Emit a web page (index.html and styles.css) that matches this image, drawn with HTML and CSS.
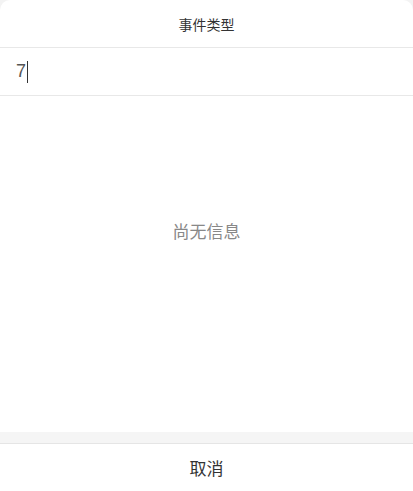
FILE: index.html
```html
<!DOCTYPE html>
<html lang="zh-CN">
<head>
    <meta charset="UTF-8">
    <meta name="viewport" content="width=device-width, initial-scale=1.0">
    <title>事件类型</title>
    <link rel="stylesheet" href="styles.css">
</head>
<body>
    <div class="sheet">
        <div class="sheet-title">事件类型</div>
        <div class="search-row">
            <span class="search-value">7</span><span class="caret"></span>
        </div>
        <div class="empty">尚无信息</div>
        <div class="gap"></div>
        <div class="cancel">取消</div>
    </div>
</body>
</html>
```

FILE: styles.css
```css
html, body {
    margin: 0;
    height: 100%;
    background: #f3f3f3;
}
body {
    font-family: "Noto Sans CJK SC", "Noto Sans", sans-serif;
    color: #333;
}
.sheet {
    height: 100%;
    display: flex;
    flex-direction: column;
    background: #fff;
    border-radius: 10px 10px 0 0;
    overflow: hidden;
}
.sheet-title {
    height: 47px;
    display: flex;
    align-items: center;
    justify-content: center;
    font-size: 14px;
    color: #333;
    border-bottom: 1px solid #e8e8e8;
}
.search-row {
    height: 47px;
    display: flex;
    align-items: center;
    padding-left: 16px;
    border-bottom: 1px solid #e8e8e8;
}
.search-value {
    font-family: "Liberation Sans", Arial, sans-serif;
    font-size: 18px;
    color: #555;
}
.caret {
    width: 1px;
    height: 22px;
    background: #333;
    margin-left: 1px;
}
.empty {
    flex: 1;
    padding-top: 124px;
    line-height: 22px;
    text-align: center;
    font-size: 17px;
    color: #888;
}
.gap {
    height: 11px;
    background: #f5f5f5;
    border-bottom: 1px solid #e5e5e5;
}
.cancel {
    height: 47px;
    display: flex;
    align-items: center;
    justify-content: center;
    font-size: 17px;
    color: #333;
}
```
